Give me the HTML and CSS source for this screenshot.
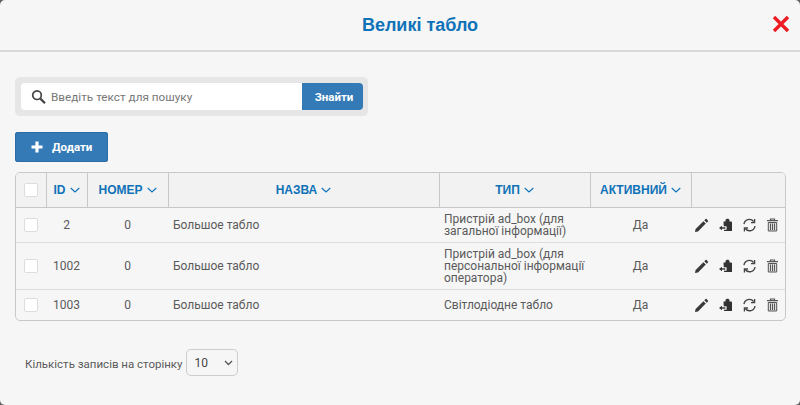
FILE: index.html
```html
<!DOCTYPE html>
<html lang="uk">
<head>
<meta charset="utf-8">
<title>Великі табло</title>
<link rel="stylesheet" href="styles.css">
</head>
<body>
<div class="modal">
  <header class="head">
    <h1 class="title">Великі табло</h1>
    <svg class="close" width="18" height="18" viewBox="0 0 18 18"><path d="M2 2 16 16M16 2 2 16" stroke="#ed1c24" stroke-width="3.4" fill="none"/></svg>
  </header>
  <main class="body">
    <div class="search">
      <div class="search-field">
        <svg class="search-icon" width="16" height="16" viewBox="0 0 16 16"><circle cx="6" cy="6.200" r="4.300" fill="none" stroke="#444" stroke-width="1.700"/><path d="M9.400 9.600 14 14.200" stroke="#444" stroke-width="2.200" fill="none"/></svg>
        <span class="placeholder">Введіть текст для пошуку</span>
      </div>
      <button class="btn search-btn">Знайти</button>
    </div>
    <button class="btn add-btn"><svg width="12" height="12" viewBox="0 0 12 12"><path d="M6 .5V11.500M.5 6H11.500" stroke="#fff" stroke-width="3.200" fill="none"/></svg>Додати</button>
    <div class="table-wrap">
      <table class="grid">
        <colgroup>
          <col class="c-check"><col class="c-id"><col class="c-num"><col class="c-name"><col class="c-type"><col class="c-active"><col class="c-actions">
        </colgroup>
        <thead>
          <tr>
            <th><span class="check"></span></th>
            <th>ID<svg class="chev" width="10" height="6" viewBox="0 0 10 6"><path d="M.7 1 5 5 9.300 1" fill="none" stroke="#0f72b8" stroke-width="1.100"/></svg></th>
            <th>НОМЕР<svg class="chev" width="10" height="6" viewBox="0 0 10 6"><path d="M.7 1 5 5 9.300 1" fill="none" stroke="#0f72b8" stroke-width="1.100"/></svg></th>
            <th>НАЗВА<svg class="chev" width="10" height="6" viewBox="0 0 10 6"><path d="M.7 1 5 5 9.300 1" fill="none" stroke="#0f72b8" stroke-width="1.100"/></svg></th>
            <th>ТИП<svg class="chev" width="10" height="6" viewBox="0 0 10 6"><path d="M.7 1 5 5 9.300 1" fill="none" stroke="#0f72b8" stroke-width="1.100"/></svg></th>
            <th>АКТИВНИЙ<svg class="chev" width="10" height="6" viewBox="0 0 10 6"><path d="M.7 1 5 5 9.300 1" fill="none" stroke="#0f72b8" stroke-width="1.100"/></svg></th>
            <th></th>
          </tr>
        </thead>
        <tbody>
          <tr class="r1">
            <td><span class="check"></span></td><td class="ctr">2</td><td class="ctr">0</td><td>Большое табло</td>
            <td>Пристрій ad_box (для загальної інформації)</td><td class="ctr">Да</td>
            <td class="acts"><svg class="ico" width="15" height="15" viewBox="0 0 15 15"><use href="#i-edit"/></svg><svg class="ico" width="15" height="15" viewBox="0 0 15 15"><use href="#i-clip"/></svg><svg class="ico" width="15" height="15" viewBox="0 0 15 15"><use href="#i-sync"/></svg><svg class="ico" width="15" height="15" viewBox="0 0 15 15"><use href="#i-trash"/></svg></td>
          </tr>
          <tr class="r2">
            <td><span class="check"></span></td><td class="ctr">1002</td><td class="ctr">0</td><td>Большое табло</td>
            <td>Пристрій ad_box (для персональної інформації оператора)</td><td class="ctr">Да</td>
            <td class="acts"><svg class="ico" width="15" height="15" viewBox="0 0 15 15"><use href="#i-edit"/></svg><svg class="ico" width="15" height="15" viewBox="0 0 15 15"><use href="#i-clip"/></svg><svg class="ico" width="15" height="15" viewBox="0 0 15 15"><use href="#i-sync"/></svg><svg class="ico" width="15" height="15" viewBox="0 0 15 15"><use href="#i-trash"/></svg></td>
          </tr>
          <tr class="r3">
            <td><span class="check"></span></td><td class="ctr">1003</td><td class="ctr">0</td><td>Большое табло</td>
            <td>Світлодіодне табло</td><td class="ctr">Да</td>
            <td class="acts"><svg class="ico" width="15" height="15" viewBox="0 0 15 15"><use href="#i-edit"/></svg><svg class="ico" width="15" height="15" viewBox="0 0 15 15"><use href="#i-clip"/></svg><svg class="ico" width="15" height="15" viewBox="0 0 15 15"><use href="#i-sync"/></svg><svg class="ico" width="15" height="15" viewBox="0 0 15 15"><use href="#i-trash"/></svg></td>
          </tr>
        </tbody>
      </table>
    </div>
    <div class="pager">
      <span class="pager-label">Кількість записів на сторінку</span>
      <div class="select"><span>10</span><svg width="9" height="6" viewBox="0 0 9 6"><path d="M1 1 4.500 4.500 8 1" fill="none" stroke="#555" stroke-width="1.300"/></svg></div>
    </div>
  </main>
</div>
<svg class="defs" width="0" height="0">
  <defs>
    <g id="i-edit" fill="#3a3a3a"><path d="M1 14 1.600 11 9.400 3.200 11.800 5.600 4 13.400Z"/><path d="M10.300 2.300 11.500 1.100a.8.8 0 0 1 1.100 0l1.300 1.300a.8.8 0 0 1 0 1.100l-1.200 1.200Z"/></g>
    <g id="i-clip"><path d="M5.500 3.600H7.500V2.400C7.500 1.300 8.300.8 9.500.8s2 .5 2 1.600V3.600H13.500L14 4.200V13H6Z" fill="#333"/><path d="M8.600 10H2.500" stroke="#f6f6f6" stroke-width="3.400" fill="none"/><path d="M7.300 10H3" stroke="#333" stroke-width="1.400" fill="none"/><path d="M1 10 4 7.800V12.200Z" fill="#333"/></g>
    <g id="i-sync" fill="none" stroke="#444" stroke-width="1.400"><path d="M2 6.200A5.400 5.400 0 0 1 11.600 3.500"/><path d="M13 8A5.400 5.400 0 0 1 3.400 10.700"/><path d="M12.600 1v3.700H9M2.400 13.600V10H6" stroke-width="1.300"/></g>
    <g id="i-trash"><path d="M4.500 2V1h4v1M1 2.700h11" fill="none" stroke="#555" stroke-width="1.200"/><path d="M2.300 4.500h8.400V13H2.300Z" fill="#ddd" stroke="#555"/><path d="M4.500 5.500v6.500M6.500 5.500v6.500M8.500 5.500v6.500" stroke="#555" stroke-width="1"/></g>
  </defs>
</svg>
</body>
</html>
```
FILE: styles.css
```css
* { box-sizing: border-box; }
html, body { margin: 0; height: 100%; background: #5f5f5f; }
body { font-family: Roboto, "Liberation Sans", sans-serif; font-size: 12px; color: #5a5a5a; overflow: hidden; }
.defs { position: absolute; }
.modal { width: 800px; height: 405px; background: #f6f6f6; border-radius: 5px; overflow: hidden; }
.head { height: 52px; border-bottom: 2px solid #d9d9d9; display: flex; align-items: center; justify-content: center; position: relative; padding-left: 40px; }
.title { margin: 0; font: bold 18px "Liberation Sans", sans-serif; color: #0f72b8; }
.close { position: absolute; right: 10px; top: 15px; }
.body { padding: 25px 14px 0 15px; }
.search { width: 353px; height: 39px; background: #e6e6e6; border-radius: 5px; padding: 6px 5px 6px 6px; display: flex; }
.search-field { flex: 1; background: #fff; border-radius: 4px 0 0 4px; display: flex; align-items: center; padding-left: 10px; gap: 4px; }
.placeholder { color: #777; font-size: 11.75px; }
.btn { border: 0; background: #337ab7; color: #fff; font: bold 11.5px Roboto, sans-serif; }
.search-btn { width: 61px; padding: 0 0 0 3px; border-radius: 0 4px 4px 0; }
.add-btn { display: flex; align-items: center; gap: 9px; width: 93px; height: 30px; margin-top: 16px; padding: 0 0 0 16px; border-radius: 3px; box-shadow: inset 0 0 0 1px #2e6da4; }
.table-wrap { margin-top: 10px; width: 771px; border: 1px solid #c8c8c8; border-radius: 5px; overflow: hidden; }
.grid { width: 100%; border-collapse: collapse; table-layout: fixed; }
.c-check { width: 30px; } .c-id { width: 41px; } .c-num { width: 81px; } .c-name { width: 271px; }
.c-type { width: 151px; } .c-active { width: 101px; } .c-actions { width: 94px; }
th { height: 34px; background: #f2f2f2; color: #0f72b8; font: bold 12px "Liberation Sans", sans-serif; text-align: center; padding: 1px 0 0; border-left: 1px solid #c8c8c8; border-bottom: 1px solid #c8c8c8; }
th:first-child, td:first-child { border-left: 0; }
.chev { margin-left: 4px; vertical-align: 1px; }
td { padding: 0 5px; line-height: 12px; vertical-align: middle; border-bottom: 1px solid #dcdcdc; }
tbody tr:last-child td { border-bottom: 0; }
.r1 td { height: 35px; } .r2 td { height: 47px; } .r3 td { height: 31px; }
.ctr { text-align: center; }
td:first-child, th:first-child { text-align: center; padding: 0; }
.check { display: inline-block; width: 14px; height: 14px; background: #fff; border: 1px solid #ddd; border-radius: 2px; vertical-align: middle; }
.acts { padding: 2px 0 0 3px; white-space: nowrap; font-size: 0; }
.ico { margin-right: 9px; vertical-align: middle; }
.pager { display: flex; align-items: center; gap: 3px; margin-top: 28px; padding-left: 10px; font-size: 11.5px; }
.pager-label { padding-top: 2px; }
.select { width: 52px; height: 27px; border: 1px solid #ccc; border-radius: 5px; display: flex; align-items: center; justify-content: space-between; padding: 0 4px 0 8px; color: #444; font-size: 12px; }
```
